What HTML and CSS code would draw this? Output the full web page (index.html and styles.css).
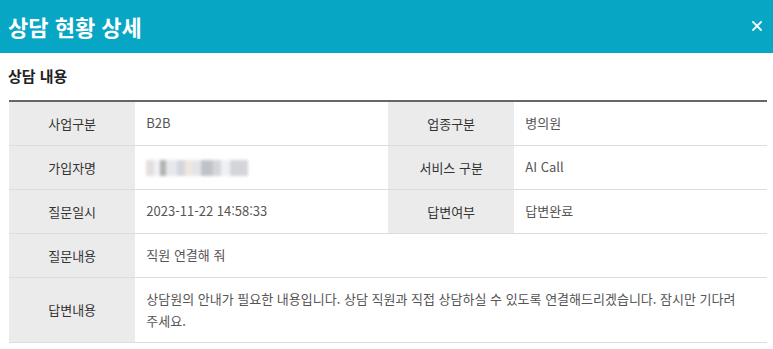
FILE: index.html
```html
<!DOCTYPE html>
<html lang="ko">
<head>
    <meta charset="UTF-8">
    <title>상담 현황 상세</title>
    <link rel="stylesheet" href="styles.css">
</head>
<body>
    <div class="modal">
        <div class="modal-header">
            <h1>상담 현황 상세</h1>
            <button class="close-btn" aria-label="닫기">
                <svg width="10" height="10" viewBox="0 0 10 10">
                    <path d="M1 1 L9 9 M9 1 L1 9" stroke="#ffffff" stroke-width="1.8" stroke-linecap="square"/>
                </svg>
            </button>
        </div>
        <div class="modal-body">
            <h2 class="section-title">상담 내용</h2>
            <table class="detail-table">
                <colgroup>
                    <col class="col-label">
                    <col class="col-value">
                    <col class="col-label">
                    <col class="col-value">
                </colgroup>
                <tr>
                    <th>사업구분</th>
                    <td>B2B</td>
                    <th>업종구분</th>
                    <td>병의원</td>
                </tr>
                <tr>
                    <th>가입자명</th>
                    <td><span class="masked"></span></td>
                    <th>서비스 구분</th>
                    <td>AI Call</td>
                </tr>
                <tr>
                    <th>질문일시</th>
                    <td>2023-11-22 14:58:33</td>
                    <th>답변여부</th>
                    <td>답변완료</td>
                </tr>
                <tr>
                    <th>질문내용</th>
                    <td colspan="3">직원 연결해 줘</td>
                </tr>
                <tr class="tall">
                    <th>답변내용</th>
                    <td colspan="3">상담원의 안내가 필요한 내용입니다. 상담 직원과 직접 상담하실 수 있도록 연결해드리겠습니다. 잠시만 기다려 주세요.</td>
                </tr>
            </table>
        </div>
    </div>
</body>
</html>
```

FILE: styles.css
```css
* {
    margin: 0;
    padding: 0;
    box-sizing: border-box;
}

body {
    font-family: "Noto Sans CJK KR", "Noto Sans", sans-serif;
    background: #ffffff;
    color: #333333;
}

.modal-header {
    background-color: #07a6c4;
    height: 53px;
    display: flex;
    align-items: center;
    justify-content: space-between;
    padding: 0 11px 0 8px;
}

.modal-header h1 {
    color: #ffffff;
    font-size: 22px;
    font-weight: 700;
    line-height: 1;
    margin-top: -2px;
}

.close-btn {
    background: none;
    border: none;
    cursor: pointer;
    display: flex;
    margin-top: -2px;
}

.modal-body {
    padding: 0 6px 0 9px;
}

.section-title {
    font-size: 15px;
    font-weight: 700;
    color: #222222;
    line-height: 1;
    padding: 15px 0 0 0;
    height: 47px;
    margin-left: -1px;
}

.detail-table {
    width: 100%;
    border-collapse: collapse;
    table-layout: fixed;
    border-top: 2px solid #666666;
    font-size: 13px;
}

.col-label {
    width: 126px;
}

.col-value {
    width: 252px;
}

.detail-table tr {
    height: 44px;
    border-bottom: 1px solid #dddddd;
}

.detail-table tr.tall {
    height: 65px;
}

.detail-table th {
    background-color: #ebebeb;
    font-weight: 400;
    color: #333333;
    text-align: center;
}

.detail-table td {
    color: #555555;
    padding: 0 11px;
    line-height: 22px;
    word-break: keep-all;
}

.masked {
    display: inline-block;
    width: 102px;
    height: 16px;
    vertical-align: middle;
    background: linear-gradient(90deg, #e2dcdc 0 8%, #eef0f2 8% 14%, #aaaaaa 14% 20%, #e4e6ea 20% 30%, #cfd3d8 30% 38%, #ede4dc 38% 46%, #dfe3e6 46% 54%, #b9bdc2 54% 66%, #d0d2d6 66% 74%, #edeff2 74% 82%, #cfd1d4 82% 100%);
    filter: blur(1.5px);
    opacity: 0.9;
}
```
